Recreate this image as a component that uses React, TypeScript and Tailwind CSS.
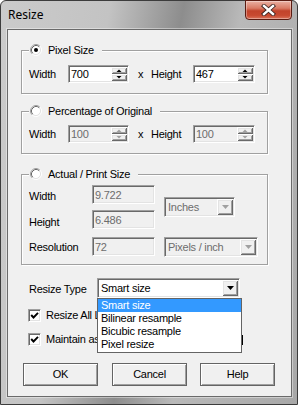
import React from "react";

const sunken =
  "border border-t-[#a0a0a0] border-l-[#a0a0a0] border-r-white border-b-white shadow-[inset_1px_1px_0_#696969,inset_-1px_-1px_0_#e3e3e3]";
const raised =
  "bg-[#f0f0f0] shadow-[inset_1px_1px_0_#fff,inset_-1px_-1px_0_#696969,inset_2px_2px_0_#e3e3e3,inset_-2px_-2px_0_#a0a0a0]";

function Radio({ checked }: { checked?: boolean }) {
  return (
    <svg width="12" height="12" viewBox="0 0 12 12" className="shrink-0">
      <circle cx="6" cy="6" r="4.5" fill="#fff" />
      <path d="M2.11 9.89A5.5 5.5 0 0 1 9.89 2.11" stroke="#a0a0a0" fill="none" />
      <path d="M9.89 2.11A5.5 5.5 0 0 1 2.11 9.89" stroke="#fff" fill="none" />
      <path d="M2.82 9.18A4.5 4.5 0 0 1 9.18 2.82" stroke="#696969" fill="none" />
      <path d="M9.18 2.82A4.5 4.5 0 0 1 2.82 9.18" stroke="#e3e3e3" fill="none" />
      {checked && <circle cx="6" cy="6" r="2" fill="#000" />}
    </svg>
  );
}

function Check() {
  return (
    <div className={`${sunken} bg-white w-[13px] h-[13px] shrink-0 flex items-center justify-center`}>
      <svg width="9" height="9" viewBox="0 0 9 9">
        <polyline points="1.2,4 3.5,6.5 8,1.8" fill="none" stroke="#000" strokeWidth="1.9" />
      </svg>
    </div>
  );
}

function SpinBtn({ up, disabled }: { up?: boolean; disabled?: boolean }) {
  const c = disabled ? "#a0a0a0" : "#000";
  return (
    <div className={`${raised} h-[7px] w-[16px] flex`}>
      <svg width="16" height="7" viewBox="0 0 16 7">
        {up ? (
          <polygon points="5.5,5 10.5,5 8,2.5" fill={c} />
        ) : (
          <polygon points="5.5,2 10.5,2 8,4.5" fill={c} />
        )}
      </svg>
    </div>
  );
}

function Spin({ value, disabled, w }: { value: string; disabled?: boolean; w: string }) {
  return (
    <div
      className={`${sunken} ${w} h-[18px] flex items-stretch ${
        disabled ? "bg-[#f0f0f0] text-[#6d6d6d]" : "bg-white text-black"
      }`}
    >
      <div className="flex-1 pl-[2px] pt-[1px] leading-[15px]">{value}</div>
      <div className="flex flex-col w-[16px] my-[1px] mr-[1px]">
        <SpinBtn up disabled={disabled} />
        <SpinBtn disabled={disabled} />
      </div>
    </div>
  );
}

function ArrowBtn({ disabled, cls }: { disabled?: boolean; cls: string }) {
  return (
    <div className={`${raised} ${cls} flex items-center justify-center`}>
      <svg width="7" height="4" viewBox="0 0 7 4">
        <polygon points="0,0 7,0 3.5,4" fill={disabled ? "#a0a0a0" : "#000"} />
      </svg>
    </div>
  );
}

function DisabledCombo({ text, w }: { text: string; w: string }) {
  return (
    <div className={`${sunken} ${w} h-[20px] bg-[#f0f0f0] flex items-center text-[#6d6d6d]`}>
      <div className="flex-1 pl-[3px] pt-[1px]">{text}</div>
      <ArrowBtn disabled cls="w-[16px] h-[16px] mr-[1px]" />
    </div>
  );
}

function Group({
  label,
  checked,
  cls,
  children,
}: {
  label: string;
  checked?: boolean;
  cls: string;
  children: React.ReactNode;
}) {
  return (
    <div
      className={`relative ml-[13px] w-[247px] border border-[#a0a0a0] shadow-[1px_1px_0_#fff,inset_1px_1px_0_#fff] ${cls}`}
    >
      <div className="absolute left-[7px] top-[-8px] h-[14px] flex items-center bg-[#f0f0f0] pl-[1px] pr-[8px]">
        <Radio checked={checked} />
        <span className="ml-[6px]">{label}</span>
      </div>
      {children}
    </div>
  );
}

function Button({ text, cls }: { text: string; cls?: string }) {
  return (
    <div
      className={`w-[75px] h-[23px] border border-[#646464] bg-[#f0f0f0] shadow-[inset_1px_1px_0_#fff,inset_-1px_-1px_0_#a0a0a0] flex items-center justify-center ${
        cls ?? ""
      }`}
    >
      {text}
    </div>
  );
}

export default function App() {
  return (
    <div className="w-[298px] h-[405px] font-['Liberation_Sans',Arial,sans-serif] text-[11px] tracking-[-0.25px] text-black">
      <div className="w-[298px] h-[405px] flex flex-col border border-[#3c3c3c] rounded-t-[6px] bg-[linear-gradient(100deg,#cbcbcb_0%,#c3c3c3_30%,#8d8d8d_50%,#b9b9b9_66%,#a8a8a8_100%)]">
        {/* Title bar */}
        <div className="h-[28px] flex justify-between items-start shrink-0">
          <div className="h-[28px] flex items-center pl-[7px] font-['Noto_Sans',sans-serif] text-[12px] tracking-normal text-black">
            Resize
          </div>
          <div className="-mt-[1px] mr-[5px] w-[47px] h-[20px] rounded-b-[4px] border border-[#5a1c12] bg-[linear-gradient(180deg,#eab1a3_0%,#d97b65_40%,#c2432b_55%,#c84a31_80%,#d9735b_100%)] shadow-[inset_0_0_0_1px_rgba(255,255,255,0.35)] flex items-center justify-center">
            <svg width="15" height="12" viewBox="0 0 15 12">
              <path d="M3 2 L12 10 M12 2 L3 10" stroke="#3b2320" strokeWidth="4.2" strokeLinecap="square" />
              <path d="M3 2 L12 10 M12 2 L3 10" stroke="#fff" strokeWidth="2.4" strokeLinecap="square" />
            </svg>
          </div>
        </div>

        {/* Client area */}
        <div className="ml-[6px] w-[285px] h-[368px] border border-[#6a6a6a] bg-[#f0f0f0] flex flex-col shrink-0 shadow-[0_0_0_1px_rgba(255,255,255,0.4)]">
          <Group label="Pixel Size" checked cls="mt-[20px] h-[44px]">
            <div className="mt-[14px] pl-[7px] flex items-center h-[18px]">
              <span className="w-[39px]">Width</span>
              <Spin value="700" w="w-[61px]" />
              <span className="w-[22px] pl-[9px]">x</span>
              <span className="w-[42px]">Height</span>
              <Spin value="467" w="w-[62px]" />
            </div>
          </Group>

          <Group label="Percentage of Original" cls="mt-[17px] h-[43px]">
            <div className="mt-[13px] pl-[7px] flex items-center h-[18px]">
              <span className="w-[39px]">Width</span>
              <Spin value="100" disabled w="w-[61px]" />
              <span className="w-[22px] pl-[9px]">x</span>
              <span className="w-[42px]">Height</span>
              <Spin value="100" disabled w="w-[62px]" />
            </div>
          </Group>

          <Group label="Actual / Print Size" cls="mt-[20px] h-[91px]">
            <div className="mt-[10px] pl-[7px] flex">
              <div className="flex flex-col">
                <div className="flex items-center h-[19px]">
                  <span className="w-[63px] pt-[3px]">Width</span>
                  <div className={`${sunken} w-[63px] h-[19px] bg-[#f0f0f0] text-[#6d6d6d] pl-[2px] pt-[1px]`}>9.722</div>
                </div>
                <div className="flex items-center h-[19px] mt-[6px]">
                  <span className="w-[63px] pt-[5px]">Height</span>
                  <div className={`${sunken} w-[63px] h-[19px] bg-[#f0f0f0] text-[#6d6d6d] pl-[2px] pt-[1px]`}>6.486</div>
                </div>
                <div className="flex items-center h-[19px] mt-[8px]">
                  <span className="w-[63px] pt-[2px]">Resolution</span>
                  <div className={`${sunken} w-[63px] h-[19px] bg-[#f0f0f0] text-[#6d6d6d] pl-[2px] pt-[1px]`}>72</div>
                </div>
              </div>
              <div className="flex flex-col ml-[9px]">
                <div className="mt-[12px]">
                  <DisabledCombo text="Inches" w="w-[71px]" />
                </div>
                <div className="mt-[20px]">
                  <DisabledCombo text="Pixels / inch" w="w-[94px]" />
                </div>
              </div>
            </div>
          </Group>

          {/* Resize type */}
          <div className="mt-[13px] pl-[21px] flex items-center h-[20px]">
            <span className="w-[68px] pt-[2px]">Resize Type</span>
            <div className="relative z-10">
              <div className={`${sunken} w-[143px] h-[20px] bg-white flex items-center`}>
                <div className="flex-1 pl-[3px] pt-[1px]">Smart size</div>
                <ArrowBtn cls="w-[16px] h-[16px] mr-[1px]" />
              </div>
              <div className="absolute left-0 top-[20px] w-[145px] h-[55px] border border-[#646464] bg-white flex flex-col">
                <div className="h-[13px] bg-[#3399ff] text-white pl-[3px] leading-[13px]">Smart size</div>
                <div className="h-[13px] pl-[3px] leading-[13px]">Bilinear resample</div>
                <div className="h-[13px] pl-[3px] leading-[13px]">Bicubic resample</div>
                <div className="h-[13px] pl-[3px] leading-[13px]">Pixel resize</div>
              </div>
            </div>
          </div>

          <div className="mt-[11px] pl-[20px] flex items-center h-[13px]">
            <Check />
            <span className="ml-[5px] w-[51px] overflow-hidden whitespace-nowrap">Resize All Layers</span>
          </div>
          <div className="mt-[11px] pl-[20px] flex items-center h-[13px]">
            <Check />
            <span className="ml-[5px] w-[51px] overflow-hidden whitespace-nowrap">Maintain aspect ratio</span>
            <span className="ml-[145px] w-[2px] h-[10px] border-l border-black mt-[1px]" />
          </div>

          <div className="mt-[17px] pl-[15px] flex">
            <Button text="OK" />
            <Button text="Cancel" cls="ml-[14px]" />
            <Button text="Help" cls="ml-[13px]" />
          </div>
        </div>
      </div>
    </div>
  );
}
